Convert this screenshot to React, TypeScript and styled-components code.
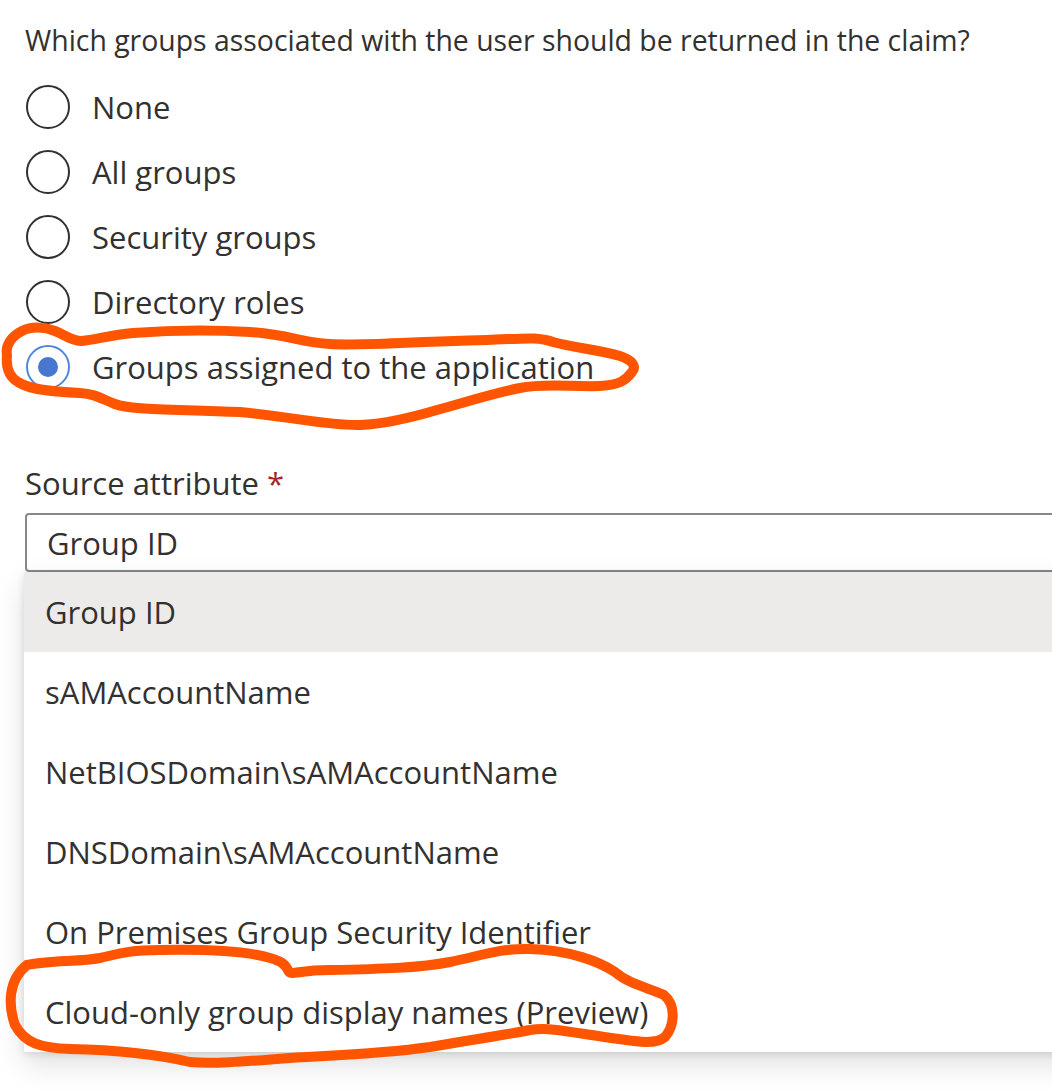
import React from "react";
import styled, { createGlobalStyle } from "styled-components";

const Global = createGlobalStyle`
  html, body { margin: 0; padding: 0; background: #ffffff; overflow: hidden; }
  body { font-family: "Segoe UI", "Open Sans", "Noto Sans", sans-serif; color: #323130; }
`;

const Page = styled.div`
  position: relative;
  width: 1052px;
  height: 1091px;
  overflow: hidden;
`;

const Form = styled.div`
  display: flex;
  flex-direction: column;
  padding-left: 25px;
  width: 1100px;
`;

const Question = styled.div`
  height: 74px;
  font-size: 28.4px;
  line-height: 80px;
  display: flex;
  align-items: flex-start;
`;

const RadioGroup = styled.div`
  display: flex;
  flex-direction: column;
`;

const RadioRow = styled.label`
  height: 65px;
  display: flex;
  align-items: center;
  gap: 22px;
  font-size: 31px;
  line-height: 40px;
`;

const Circle = styled.span<{ $checked?: boolean }>`
  box-sizing: border-box;
  width: 44px;
  height: 44px;
  margin-left: 1px;
  border-radius: 50%;
  border: 2px solid ${(p) => (p.$checked ? "#5287d8" : "#323130")};
  display: flex;
  align-items: center;
  justify-content: center;
  flex: none;
`;

const Dot = styled.span`
  width: 20px;
  height: 20px;
  border-radius: 50%;
  background: #4877cf;
`;

const FieldLabel = styled.div`
  margin-top: 54px;
  height: 60px;
  font-size: 31px;
  line-height: 40px;
  display: flex;
  align-items: center;
  gap: 8px;
`;

const Required = styled.span`
  color: #a4262c;
`;

const Select = styled.div`
  box-sizing: border-box;
  height: 59px;
  border: 2px solid #8a8886;
  border-radius: 4px;
  display: flex;
  align-items: center;
  padding-left: 20px;
  font-size: 31px;
`;

const Menu = styled.div`
  margin-left: -1px;
  display: flex;
  flex-direction: column;
  background: #ffffff;
  box-shadow: 0 12px 28px rgba(0, 0, 0, 0.13), 0 2px 7px rgba(0, 0, 0, 0.11);
`;

const Option = styled.div<{ $active?: boolean }>`
  height: 80px;
  display: flex;
  align-items: center;
  padding-left: 21px;
  font-size: 31px;
  background: ${(p) => (p.$active ? "#edebe9" : "#ffffff")};
`;

const Overlay = styled.svg`
  position: absolute;
  left: 0;
  top: 0;
  width: 1052px;
  height: 1091px;
  pointer-events: none;
`;

const options = [
  "None",
  "All groups",
  "Security groups",
  "Directory roles",
  "Groups assigned to the application",
];

const attributes = [
  "Group ID",
  "sAMAccountName",
  "NetBIOSDomain\\sAMAccountName",
  "DNSDomain\\sAMAccountName",
  "On Premises Group Security Identifier",
  "Cloud-only group display names (Preview)",
];

export default function App() {
  return (
    <Page>
      <Global />
      <Form>
        <Question>Which groups associated with the user should be returned in the claim?</Question>
        <RadioGroup>
          {options.map((o, i) => (
            <RadioRow key={o}>
              <Circle $checked={i === 4}>{i === 4 && <Dot />}</Circle>
              {o}
            </RadioRow>
          ))}
        </RadioGroup>
        <FieldLabel>
          Source attribute<Required>*</Required>
        </FieldLabel>
        <Select>Group ID</Select>
        <Menu>
          {attributes.map((a, i) => (
            <Option key={a} $active={i === 0}>
              {a}
            </Option>
          ))}
        </Menu>
      </Form>
      <Overlay viewBox="0 0 1052 1091">
        <path
          d="M 7 355 C 5 345 12 336 22 331 C 32 326 45 327 55 331 C 65 335 72 341 82 341 C 95 340 110 335 133 333 C 160 331 200 329 250 332 C 290 335 300 342 330 344 C 360 346 400 342 487 340 C 520 339 537 336 553 342 C 575 348 600 350 620 356 C 632 360 637 366 632 372 C 626 380 620 385 600 386 C 570 387 545 383 520 388 C 490 394 460 404 437 410 C 410 418 385 424 360 425 C 330 426 300 418 240 412 C 170 409 130 410 115 404 C 100 398 95 394 80 393 C 55 392 30 390 18 382 C 8 376 6 365 7 355 Z"
          fill="none"
          stroke="#ff5500"
          strokeWidth="10"
          strokeLinecap="round"
          strokeLinejoin="round"
        />
        <path
          d="M 27 965 C 50 960 80 962 100 958 C 115 955 125 950 160 950 C 210 949 250 952 270 958 C 280 961 285 963 289 972 C 293 975 300 970 330 970 C 380 969 420 968 450 962 C 480 956 500 948 530 949 C 570 950 600 962 615 972 C 630 985 650 988 664 995 C 676 1005 675 1025 665 1037 C 655 1045 640 1042 604 1037 C 570 1032 550 1027 530 1030 C 500 1036 470 1040 430 1047 C 380 1054 340 1055 290 1058 C 240 1062 210 1064 190 1062 C 160 1055 120 1050 70 1049 C 40 1048 25 1043 15 1025 C 8 1005 8 980 27 965 Z"
          fill="none"
          stroke="#ff5500"
          strokeWidth="10"
          strokeLinecap="round"
          strokeLinejoin="round"
        />
      </Overlay>
    </Page>
  );
}
